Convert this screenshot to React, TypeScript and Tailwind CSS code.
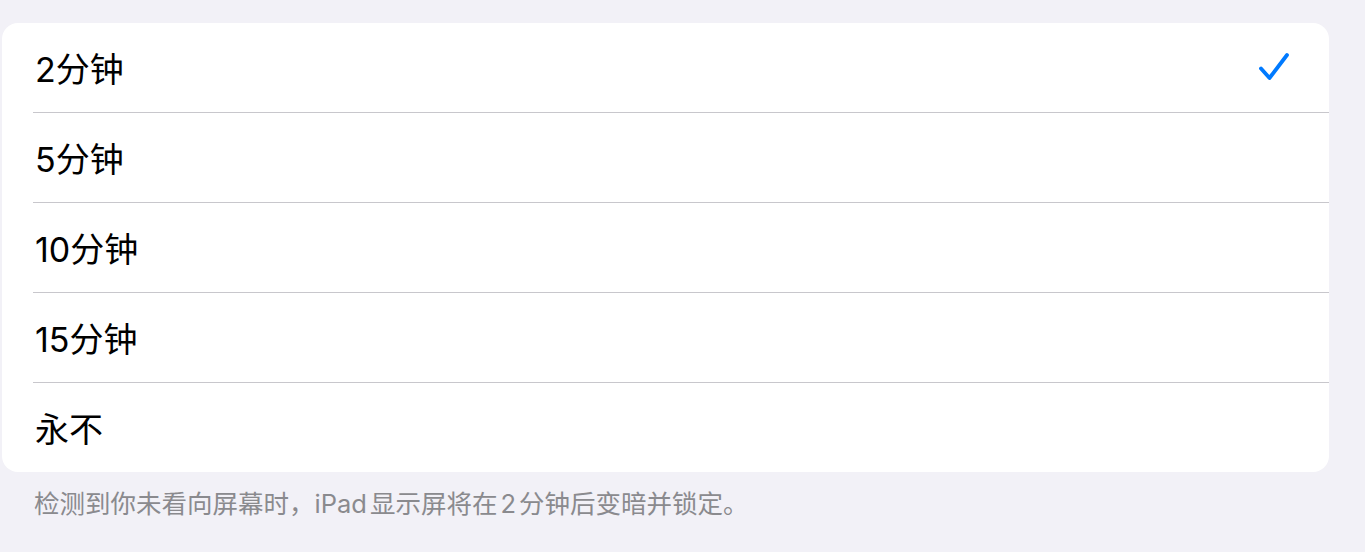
const OPTIONS = ['2分钟', '5分钟', '10分钟', '15分钟', '永不'];

// iOS-style checkmark, drawn to match the system glyph
function Check() {
  return (
    <svg width="34" height="34" viewBox="0 0 34 34" fill="none" className="shrink-0">
      <path
        d="M4 17.5 L12.5 27 L30 4"
        stroke="#007aff"
        strokeWidth="3.8"
        strokeLinecap="round"
        strokeLinejoin="round"
      />
    </svg>
  );
}

export default function App() {
  const selected = 0;
  return (
    <div
      className="min-h-[552px] bg-[#f2f1f7] pt-[23px] pl-[2px] pr-[36px]"
      style={{ fontFamily: 'Inter, "Noto Sans CJK SC", sans-serif' }}
    >
      <div className="overflow-hidden rounded-[16px] bg-white">
        {OPTIONS.map((label, i) => (
          <div key={label} className="pl-[31px]">
            <div
              className={
                i < OPTIONS.length - 1
                  ? 'flex h-[90px] items-center justify-between border-b border-[#c8c7cc] pr-[38px]'
                  : 'flex h-[89px] items-center justify-between pr-[38px]'
              }
            >
              <span className="pl-[2px] pt-[4px] text-[34px] leading-none text-black">{label}</span>
              {i === selected && <Check />}
            </div>
          </div>
        ))}
      </div>
      <p className="pl-[32px] pt-[16px] text-[25.5px] leading-[32px] text-[#8a8a8e]">
        检测到你未看向屏幕时，<span className="pr-[3px]">iPad</span>显示屏将在
        <span className="px-[3px]">2</span>分钟后变暗并锁定。
      </p>
    </div>
  );
}
